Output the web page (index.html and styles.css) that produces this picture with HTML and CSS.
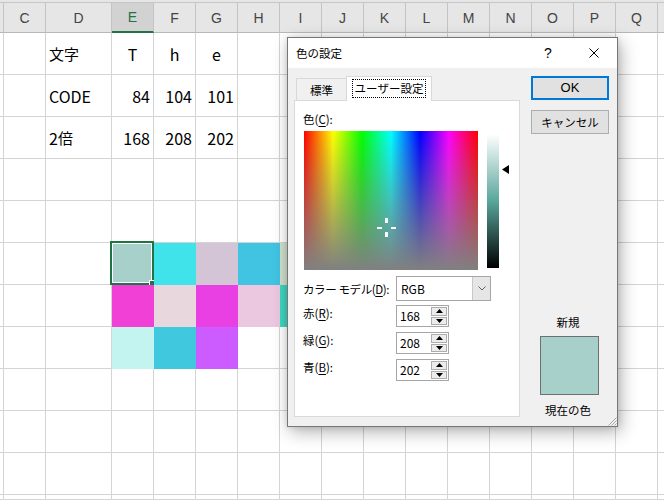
FILE: index.html
```html
<!DOCTYPE html>
<html lang="ja">
<head>
<meta charset="utf-8">
<title>色の設定</title>
<link rel="stylesheet" href="styles.css">
</head>
<body>
<div class="sheet">
  <div class="topbar"></div>
  <div class="row hdr">
    <div class="cell gut"></div><div class="cell">C</div><div class="cell wide">D</div><div class="cell hsel">E</div><div class="cell">F</div><div class="cell">G</div><div class="cell">H</div><div class="cell">I</div><div class="cell">J</div><div class="cell">K</div><div class="cell">L</div><div class="cell">M</div><div class="cell">N</div><div class="cell">O</div><div class="cell">P</div><div class="cell">Q</div><div class="cell rest"></div>
  </div>
  <div class="row">
    <div class="cell gut"></div><div class="cell"></div><div class="cell wide jp">文字</div><div class="cell ctr">T</div><div class="cell ctr">h</div><div class="cell ctr">e</div><div class="cell"></div><div class="cell"></div><div class="cell"></div><div class="cell"></div><div class="cell"></div><div class="cell"></div><div class="cell"></div><div class="cell"></div><div class="cell"></div><div class="cell"></div><div class="cell rest"></div>
  </div>
  <div class="row">
    <div class="cell gut"></div><div class="cell"></div><div class="cell wide">CODE</div><div class="cell num">84</div><div class="cell num">104</div><div class="cell num">101</div><div class="cell"></div><div class="cell"></div><div class="cell"></div><div class="cell"></div><div class="cell"></div><div class="cell"></div><div class="cell"></div><div class="cell"></div><div class="cell"></div><div class="cell"></div><div class="cell rest"></div>
  </div>
  <div class="row">
    <div class="cell gut"></div><div class="cell"></div><div class="cell wide">2<span class="jp">倍</span></div><div class="cell num">168</div><div class="cell num">208</div><div class="cell num">202</div><div class="cell"></div><div class="cell"></div><div class="cell"></div><div class="cell"></div><div class="cell"></div><div class="cell"></div><div class="cell"></div><div class="cell"></div><div class="cell"></div><div class="cell"></div><div class="cell rest"></div>
  </div>
  <div class="row">
    <div class="cell gut"></div><div class="cell"></div><div class="cell wide"></div><div class="cell"></div><div class="cell"></div><div class="cell"></div><div class="cell"></div><div class="cell"></div><div class="cell"></div><div class="cell"></div><div class="cell"></div><div class="cell"></div><div class="cell"></div><div class="cell"></div><div class="cell"></div><div class="cell"></div><div class="cell rest"></div>
  </div>
  <div class="row">
    <div class="cell gut"></div><div class="cell"></div><div class="cell wide"></div><div class="cell"></div><div class="cell"></div><div class="cell"></div><div class="cell"></div><div class="cell"></div><div class="cell"></div><div class="cell"></div><div class="cell"></div><div class="cell"></div><div class="cell"></div><div class="cell"></div><div class="cell"></div><div class="cell"></div><div class="cell rest"></div>
  </div>
  <div class="row">
    <div class="cell gut"></div><div class="cell"></div><div class="cell wide"></div><div class="cell fill f-e6 active-cell"><span class="selbox"></span><span class="handle"></span></div><div class="cell fill f-f6"></div><div class="cell fill f-g6"></div><div class="cell fill f-h6"></div><div class="cell fill f-i6"></div><div class="cell"></div><div class="cell"></div><div class="cell"></div><div class="cell"></div><div class="cell"></div><div class="cell"></div><div class="cell"></div><div class="cell"></div><div class="cell rest"></div>
  </div>
  <div class="row">
    <div class="cell gut"></div><div class="cell"></div><div class="cell wide"></div><div class="cell fill f-e7"></div><div class="cell fill f-f7"></div><div class="cell fill f-g7"></div><div class="cell fill f-h7"></div><div class="cell fill f-i7"></div><div class="cell"></div><div class="cell"></div><div class="cell"></div><div class="cell"></div><div class="cell"></div><div class="cell"></div><div class="cell"></div><div class="cell"></div><div class="cell rest"></div>
  </div>
  <div class="row">
    <div class="cell gut"></div><div class="cell"></div><div class="cell wide"></div><div class="cell fill f-e8"></div><div class="cell fill f-f8"></div><div class="cell fill f-g8"></div><div class="cell"></div><div class="cell"></div><div class="cell"></div><div class="cell"></div><div class="cell"></div><div class="cell"></div><div class="cell"></div><div class="cell"></div><div class="cell"></div><div class="cell"></div><div class="cell rest"></div>
  </div>
  <div class="row">
    <div class="cell gut"></div><div class="cell"></div><div class="cell wide"></div><div class="cell"></div><div class="cell"></div><div class="cell"></div><div class="cell"></div><div class="cell"></div><div class="cell"></div><div class="cell"></div><div class="cell"></div><div class="cell"></div><div class="cell"></div><div class="cell"></div><div class="cell"></div><div class="cell"></div><div class="cell rest"></div>
  </div>
  <div class="row">
    <div class="cell gut"></div><div class="cell"></div><div class="cell wide"></div><div class="cell"></div><div class="cell"></div><div class="cell"></div><div class="cell"></div><div class="cell"></div><div class="cell"></div><div class="cell"></div><div class="cell"></div><div class="cell"></div><div class="cell"></div><div class="cell"></div><div class="cell"></div><div class="cell"></div><div class="cell rest"></div>
  </div>
  <div class="row">
    <div class="cell gut"></div><div class="cell"></div><div class="cell wide"></div><div class="cell"></div><div class="cell"></div><div class="cell"></div><div class="cell"></div><div class="cell"></div><div class="cell"></div><div class="cell"></div><div class="cell"></div><div class="cell"></div><div class="cell"></div><div class="cell"></div><div class="cell"></div><div class="cell"></div><div class="cell rest"></div>
  </div>
  <div class="row last">
    <div class="cell gut"></div><div class="cell"></div><div class="cell wide"></div><div class="cell"></div><div class="cell"></div><div class="cell"></div><div class="cell"></div><div class="cell"></div><div class="cell"></div><div class="cell"></div><div class="cell"></div><div class="cell"></div><div class="cell"></div><div class="cell"></div><div class="cell"></div><div class="cell"></div><div class="cell rest"></div>
  </div>
</div>

<div class="dialog">
  <div class="titlebar">
    <span class="title">色の設定</span>
    <span class="capbtn help">?</span>
    <span class="capbtn"><svg width="10" height="10" viewBox="0 0 10 10"><path d="M0.5 0.5 L9.5 9.5 M9.5 0.5 L0.5 9.5" stroke="#000" stroke-width="1" fill="none"/></svg></span>
  </div>
  <div class="dbody">
    <div class="leftcol">
      <div class="tabs">
        <div class="tab">標準</div>
        <div class="tab active"><span class="focus">ユーザー設定</span></div>
      </div>
      <div class="panel">
        <div class="lbl">色(<u>C</u>):</div>
        <div class="specrow">
          <div class="spectrum">
            <svg class="cross" width="174" height="139" viewBox="0 0 174 139">
              <rect x="81" y="87" width="3" height="5" fill="#fff"/>
              <rect x="81" y="101" width="3" height="5" fill="#fff"/>
              <rect x="73" y="96" width="5" height="2" fill="#fff"/>
              <rect x="87" y="96" width="5" height="2" fill="#fff"/>
            </svg>
          </div>
          <div class="lum">
            <svg class="arrow" width="7" height="9" viewBox="0 0 7 9"><polygon points="0,4.5 7,0 7,9" fill="#000"/></svg>
          </div>
        </div>
        <div class="frow model">
          <span class="flbl tight">カラー モデル(<u>D</u>):</span>
          <div class="combo">
            <span class="cval">RGB</span>
            <span class="cbtn"><svg width="8" height="5" viewBox="0 0 8 5"><path d="M0.5 0.5 L4 4 L7.5 0.5" stroke="#606060" stroke-width="1" fill="none"/></svg></span>
          </div>
        </div>
        <div class="frow">
          <span class="flbl">赤(<u>R</u>):</span>
          <div class="spin">
            <span class="sval">168</span>
            <span class="sbtns">
              <span class="sb"><svg width="7" height="4" viewBox="0 0 7 4"><polygon points="3.5,0 7,4 0,4" fill="#000"/></svg></span>
              <span class="sb"><svg width="7" height="4" viewBox="0 0 7 4"><polygon points="0,0 7,0 3.5,4" fill="#000"/></svg></span>
            </span>
          </div>
        </div>
        <div class="frow">
          <span class="flbl">緑(<u>G</u>):</span>
          <div class="spin">
            <span class="sval">208</span>
            <span class="sbtns">
              <span class="sb"><svg width="7" height="4" viewBox="0 0 7 4"><polygon points="3.5,0 7,4 0,4" fill="#000"/></svg></span>
              <span class="sb"><svg width="7" height="4" viewBox="0 0 7 4"><polygon points="0,0 7,0 3.5,4" fill="#000"/></svg></span>
            </span>
          </div>
        </div>
        <div class="frow">
          <span class="flbl">青(<u>B</u>):</span>
          <div class="spin">
            <span class="sval">202</span>
            <span class="sbtns">
              <span class="sb"><svg width="7" height="4" viewBox="0 0 7 4"><polygon points="3.5,0 7,4 0,4" fill="#000"/></svg></span>
              <span class="sb"><svg width="7" height="4" viewBox="0 0 7 4"><polygon points="0,0 7,0 3.5,4" fill="#000"/></svg></span>
            </span>
          </div>
        </div>
      </div>
    </div>
    <div class="rightcol">
      <div class="btn ok">OK</div>
      <div class="btn cancel">キャンセル</div>
      <div class="swlbl newlbl">新規</div>
      <div class="swatch"></div>
      <div class="swlbl curlbl">現在の色</div>
    </div>
  </div>
  <svg class="grip" width="10" height="10" viewBox="0 0 10 10"><path d="M9.5 1.5 L1.5 9.5 M9.5 4.5 L4.5 9.5 M9.5 7.5 L7.5 9.5" stroke="#a8a8a8" stroke-width="1" fill="none"/></svg>
</div>
</body>
</html>
```

FILE: styles.css
```css
html, body {
  margin: 0;
  padding: 0;
  background: #fff;
}

body {
  width: 664px;
  height: 501px;
  overflow: hidden;
  position: relative;
}

.sheet {
  font-family: "Noto Sans CJK JP", sans-serif;
  font-size: 16px;
  color: #000;
  display: flex;
  flex-direction: column;
}

.topbar {
  height: 3px;
  box-sizing: border-box;
  background: #e6e6e6;
  border-bottom: 1px solid #c6c6c6;
}

.row {
  display: flex;
  height: 42px;
}

.row.last {
  height: 5px;
}

.cell {
  box-sizing: border-box;
  flex: none;
  width: 42px;
  height: 100%;
  border-right: 1px solid #d4d4d4;
  border-bottom: 1px solid #d4d4d4;
  display: flex;
  align-items: center;
  padding: 0 3px;
  line-height: 1;
  position: relative;
  white-space: nowrap;
}

.gut {
  width: 4px;
  padding: 0;
}

.wide {
  width: 66px;
}

.rest {
  width: 6px;
  padding: 0;
  border-right: none;
}

.ctr {
  justify-content: center;
}

.num {
  justify-content: flex-end;
}

.jp {
  font-size: 15px;
}

/* column header */
.hdr {
  height: 30px;
}

.hdr .cell {
  background: #e6e6e6;
  border-right-color: #c4c4c4;
  border-bottom-color: #b8b8b8;
  justify-content: center;
  font-family: "Liberation Sans", sans-serif;
  font-size: 14px;
  color: #444;
}

.hdr .gut {
  border-right-color: #c4c4c4;
}

.hdr .hsel {
  background: #d2d2d2;
  color: #217346;
  border-bottom: 2px solid #217346;
}

/* filled cells */
.fill {
  border-right-color: transparent;
  border-bottom-color: transparent;
}

.f-e6 { background: #a8d0ca; }
.f-f6 { background: #41e3ea; }
.f-g6 { background: #d3c5d6; }
.f-h6 { background: #40c4e2; }
.f-i6 { background: #d0dfcc; }
.f-e7 { background: #f040d6; }
.f-f7 { background: #e8d8de; }
.f-g7 { background: #e840e2; }
.f-h7 { background: #ecc8e0; }
.f-i7 { background: #3ed6c2; }
.f-e8 { background: #c4f4f0; }
.f-f8 { background: #40c8de; }
.f-g8 { background: #cc5cff; }

.selbox {
  position: absolute;
  left: -2px;
  top: -2px;
  right: -1px;
  bottom: -1px;
  border: 2px solid #217346;
  box-shadow: inset 0 0 0 1px #fff;
}

.handle {
  position: absolute;
  right: -3px;
  bottom: -3px;
  width: 6px;
  height: 6px;
  background: #217346;
  border: 1px solid #fff;
  border-right: none;
  border-bottom: none;
}

/* dialog */
.dialog {
  position: absolute;
  left: 287px;
  top: 37px;
  width: 331px;
  height: 390px;
  box-sizing: border-box;
  border: 1px solid #777;
  background: #f0f0f0;
  box-shadow: 3px 5px 16px rgba(0, 0, 0, 0.30), 0 0 6px rgba(0, 0, 0, 0.12);
  font-family: "Noto Sans CJK JP", sans-serif;
  font-size: 11.5px;
  color: #000;
  display: flex;
  flex-direction: column;
}

.titlebar {
  height: 30px;
  flex: none;
  background: #fff;
  display: flex;
  align-items: center;
  padding-left: 8px;
}

.title {
  flex: 1;
  line-height: 16px;
}

.capbtn {
  width: 46px;
  height: 30px;
  display: flex;
  align-items: center;
  justify-content: center;
}

.help {
  font-family: "Liberation Sans", sans-serif;
  font-size: 14px;
}

.dbody {
  flex: 1;
  display: flex;
  padding: 8px 0 0 6px;
}

.leftcol {
  width: 226px;
  display: flex;
  flex-direction: column;
}

.tabs {
  height: 24px;
  display: flex;
  align-items: flex-end;
  padding-left: 2px;
}

.tab {
  box-sizing: border-box;
  height: 22px;
  width: 50px;
  border: 1px solid #d9d9d9;
  border-bottom: none;
  border-right: none;
  background: #f0f0f0;
  display: flex;
  align-items: center;
  justify-content: center;
  line-height: 16px;
}

.tab.active {
  width: 86px;
  height: 25px;
  margin-bottom: -1px;
  border-right: 1px solid #d9d9d9;
  background: #fff;
  position: relative;
  z-index: 1;
  padding-bottom: 1px;
}

.focus {
  box-sizing: border-box;
  height: 19px;
  border: 1px dotted #000;
  padding: 0 2px;
  line-height: 17px;
  display: inline-block;
}

.panel {
  box-sizing: border-box;
  height: 317px;
  background: #fff;
  border: 1px solid #d9d9d9;
  padding-top: 10px;
}

.lbl {
  line-height: 16px;
  padding-left: 8px;
}

u {
  text-decoration-thickness: 1px;
  text-underline-offset: 2px;
}

.specrow {
  display: flex;
  align-items: flex-start;
  margin-top: 4px;
  padding-left: 9px;
}

.spectrum {
  width: 174px;
  height: 139px;
  position: relative;
  background:
    linear-gradient(to bottom, rgba(128, 128, 128, 0), #808080),
    linear-gradient(to right, #ff0000, #ffff00 16.67%, #00ff00 33.33%, #00ffff 50%, #0000ff 66.67%, #ff00ff 83.33%, #ff0000);
}

.cross {
  position: absolute;
  left: 0;
  top: 0;
}

.lum {
  width: 12px;
  height: 134px;
  margin-top: 3px;
  margin-left: 9px;
  position: relative;
  background: linear-gradient(to bottom, #ffffff, #59a69c 50%, #000000);
}

.arrow {
  position: absolute;
  left: 15px;
  top: 31px;
}

.frow {
  display: flex;
  align-items: flex-start;
  margin-top: 5px;
  padding-left: 8px;
}

.frow.model {
  margin-top: 6px;
  align-items: center;
}

.frow.model + .frow {
  margin-top: 4px;
}

.flbl {
  width: 93px;
  flex: none;
  line-height: 16px;
  white-space: nowrap;
}

.flbl.tight {
  letter-spacing: -0.4px;
}

.combo {
  box-sizing: border-box;
  width: 95px;
  height: 25px;
  border: 1px solid #a6a6a6;
  background: #fff;
  display: flex;
}

.cval {
  flex: 1;
  padding-left: 4px;
  line-height: 23px;
  font-size: 12px;
}

.cbtn {
  width: 17px;
  border-left: 1px solid #c8c8c8;
  background: #e6e6e6;
  display: flex;
  align-items: center;
  justify-content: center;
}

.spin {
  box-sizing: border-box;
  width: 53px;
  height: 22px;
  border: 1px solid #a6a6a6;
  background: #fff;
  display: flex;
}

.sval {
  flex: 1;
  padding-left: 3px;
  line-height: 20px;
  font-size: 12px;
}

.sbtns {
  width: 16px;
  display: flex;
  flex-direction: column;
  gap: 1px;
  padding: 1px 1px 1px 0;
}

.sb {
  flex: 1;
  border: 1px solid #adadad;
  background: #ececec;
  display: flex;
  align-items: center;
  justify-content: center;
}

.rightcol {
  width: 78px;
  margin-left: 11px;
  display: flex;
  flex-direction: column;
}

.btn {
  box-sizing: border-box;
  height: 24px;
  border: 1px solid #adadad;
  background: #e1e1e1;
  display: flex;
  align-items: center;
  justify-content: center;
  line-height: 16px;
}

.btn.ok {
  border: 2px solid #0078d7;
  font-family: "Liberation Sans", sans-serif;
  font-size: 13px;
}

.btn.cancel {
  margin-top: 10px;
}

.swlbl {
  line-height: 16px;
  text-align: center;
  padding-right: 4px;
}

.newlbl {
  margin-top: 180px;
}

.swatch {
  box-sizing: border-box;
  width: 59px;
  height: 59px;
  margin: 6px 0 0 9px;
  border: 1px solid #6f6f6f;
  background: #a8d0ca;
}

.curlbl {
  margin-top: 7px;
}

.grip {
  position: absolute;
  right: 0;
  bottom: 0;
}
```
